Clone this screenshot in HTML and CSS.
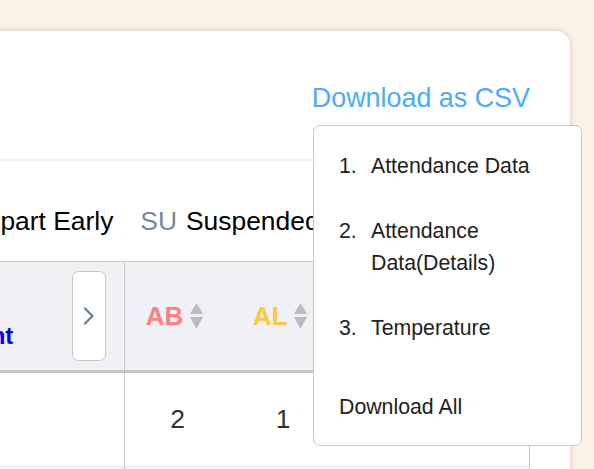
FILE: index.html
```html
<!DOCTYPE html>
<html lang="en">
<head>
<meta charset="utf-8">
<title>Attendance</title>
<link rel="stylesheet" href="styles.css">
</head>
<body>
<div class="card">
  <div class="toolbar">
    <div class="download">
      <a class="download-link" href="#">Download as CSV</a>
      <div class="menu">
        <ol class="menu-list">
          <li class="menu-item"><span class="menu-num">1.</span><span class="menu-text">Attendance Data</span></li>
          <li class="menu-item"><span class="menu-num">2.</span><span class="menu-text">Attendance Data(Details)</span></li>
          <li class="menu-item"><span class="menu-num">3.</span><span class="menu-text">Temperature</span></li>
        </ol>
        <div class="menu-all">Download All</div>
      </div>
    </div>
  </div>

  <div class="legend">
    <span class="legend-item"><span class="legend-code">DE</span><span class="legend-label">Depart Early</span></span>
    <span class="legend-item"><span class="legend-code">SU</span><span class="legend-label">Suspended</span></span>
  </div>

  <div class="table">
    <div class="row row-head">
      <div class="cell cell-first">
        <span class="student">Student</span>
        <button class="expand" type="button">
          <svg width="12" height="18" viewBox="0 0 12 18"><polyline points="2,1.5 9.5,9 2,16.5" fill="none" stroke="#6e7e93" stroke-width="2.3" stroke-linecap="round" stroke-linejoin="round"/></svg>
        </button>
      </div>
      <div class="cell cell-sort"><span class="code code-ab">AB</span><svg class="sort" width="13" height="26" viewBox="0 0 13 26"><polygon points="0,11 13,11 6.5,0" fill="#bcbcbc"/><polygon points="0,14 13,14 6.5,26" fill="#bcbcbc"/></svg></div>
      <div class="cell cell-sort"><span class="code code-al">AL</span><svg class="sort" width="13" height="26" viewBox="0 0 13 26"><polygon points="0,11 13,11 6.5,0" fill="#bcbcbc"/><polygon points="0,14 13,14 6.5,26" fill="#bcbcbc"/></svg></div>
      <div class="cell cell-sort"><span class="code code-la">LA</span></div>
      <div class="cell cell-sort"></div>
    </div>
    <div class="row row-body">
      <div class="cell cell-first"></div>
      <div class="cell cell-num">2</div>
      <div class="cell cell-num">1</div>
      <div class="cell cell-num"></div>
      <div class="cell cell-num"></div>
    </div>
    <div class="row row-body row-alt">
      <div class="cell cell-first"></div>
      <div class="cell cell-num"></div>
      <div class="cell cell-num"></div>
      <div class="cell cell-num"></div>
      <div class="cell cell-num"></div>
    </div>
  </div>
</div>
</body>
</html>
```

FILE: styles.css
```css
html {
  overflow: hidden;
}

body {
  margin: 0;
  background: #fbf1e6;
  font-family: "Liberation Sans", Arial, Helvetica, sans-serif;
  color: #000;
}

.card {
  box-sizing: border-box;
  width: 690px;
  margin: 31px 0 0 -120px;
  padding: 0 40px 0 0;
  background: #fff;
  border-radius: 14px;
  box-shadow: 0 0 6px rgba(0, 0, 0, 0.16);
}

.toolbar {
  display: flex;
  justify-content: flex-end;
  padding: 52px 0 46px;
  border-bottom: 2px solid #f0f0f5;
}

.download {
  position: relative;
}

.download-link {
  display: block;
  font-size: 26.9px;
  line-height: 30px;
  color: #4dacf8;
  text-decoration: none;
}

.menu {
  position: absolute;
  top: 42px;
  right: -52px;
  box-sizing: border-box;
  width: 269px;
  height: 321px;
  padding: 8px 16px 0 25px;
  background: #fff;
  border: 1px solid #c9c9c9;
  border-radius: 7px;
  z-index: 2;
  font-size: 21.3px;
  line-height: 32px;
  color: #222;
}

.menu-list {
  margin: 0;
  padding: 0;
  list-style: none;
}

.menu-item {
  display: flex;
  padding: 17px 0 16px;
}

.menu-item:first-child {
  padding-top: 16px;
}

.menu-num {
  flex: 0 0 32px;
}

.menu-all {
  margin-top: 15px;
  padding: 16px 0;
}

.legend {
  display: flex;
  gap: 27px;
  padding: 45px 0 25px 41px;
  font-size: 26.4px;
  line-height: 30px;
  white-space: nowrap;
  overflow: hidden;
}

.legend-item {
  display: flex;
  gap: 9px;
}

.legend-code {
  color: #778899;
}

.table {
  border-top: 1px solid #c8c8c8;
  border-right: 1px solid #c8c8c8;
}

.row {
  display: grid;
  grid-template-columns: 245px 105px 106px 106px 1fr;
}

.row-head {
  height: 108px;
  background: #f0f1f5;
  border-bottom: 3px solid #c6c6c6;
}

.row-body {
  height: 92px;
  background: #fff;
}

.row-alt {
  background: #f3f3f7;
}

.cell {
  box-sizing: border-box;
  display: flex;
  align-items: center;
  justify-content: center;
}

.cell-first {
  justify-content: space-between;
  align-items: stretch;
  padding: 9px 18px 9px 44px;
  border-right: 1px solid #c8c8c8;
}

.student {
  align-self: flex-end;
  margin-bottom: 12px;
  font-size: 24px;
  line-height: 27px;
  font-weight: bold;
  color: #0000ff;
}

.expand {
  box-sizing: border-box;
  width: 34px;
  padding: 0;
  display: flex;
  align-items: center;
  justify-content: center;
  background: #fff;
  border: 1px solid #c8c8c8;
  border-radius: 7px;
}

.cell-sort {
  gap: 7px;
  padding-right: 6px;
}

.code {
  font-size: 26px;
  line-height: 30px;
  font-weight: bold;
}

.code-ab {
  color: #ff8080;
}

.code-al {
  color: #ffc63f;
}

.code-la {
  color: #7ab8f5;
}

.sort {
  display: block;
}

.cell-num {
  font-size: 26.5px;
  line-height: 30px;
  color: #333;
}
```
